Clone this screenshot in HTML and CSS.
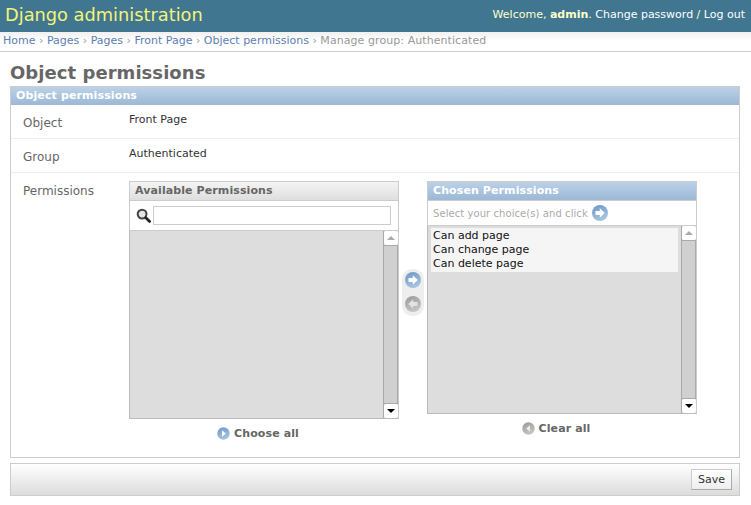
FILE: index.html
```html
<!DOCTYPE html>
<html lang="en">
<head>
    <meta charset="UTF-8">
    <title>Object permissions</title>
    <link rel="stylesheet" href="styles.css">
</head>
<body>
    <svg class="icon-defs" width="0" height="0">
        <defs>
            <linearGradient id="blueBall" x1="0" y1="0" x2="0.4" y2="1">
                <stop offset="0" stop-color="#6a97c6"/>
                <stop offset="1" stop-color="#a6c3e0"/>
            </linearGradient>
            <linearGradient id="grayBall" x1="0" y1="0" x2="0.4" y2="1">
                <stop offset="0" stop-color="#999"/>
                <stop offset="1" stop-color="#c4c4c4"/>
            </linearGradient>
        </defs>
    </svg>
    <div class="header">
        <div class="branding">Django administration</div>
        <div class="user-tools">Welcome, <strong>admin</strong>. <a href="#">Change password</a> / <a href="#">Log out</a></div>
    </div>
    <div class="breadcrumbs">
        <a href="#">Home</a> › <a href="#">Pages</a> › <a href="#">Pages</a> › <a href="#">Front Page</a> › <a href="#">Object permissions</a> › <span class="current">Manage group: Authenticated</span>
    </div>
    <div class="content">
        <h1>Object permissions</h1>
        <div class="module">
            <h2>Object permissions</h2>
            <div class="form-row">
                <div class="label">Object</div>
                <div class="value">Front Page</div>
            </div>
            <div class="form-row">
                <div class="label">Group</div>
                <div class="value">Authenticated</div>
            </div>
            <div class="form-row permissions-row">
                <div class="label">Permissions</div>
                <div class="selector">
                    <div class="selector-column">
                        <div class="selector-box">
                            <h3 class="available-title">Available Permissions</h3>
                            <div class="selector-filter">
                                <svg class="search-icon" width="15" height="15" viewBox="0 0 16 16">
                                    <circle cx="6.5" cy="6.5" r="4.7" fill="#e4e4e4" stroke="#444" stroke-width="2.2"/>
                                    <path d="M10.500 10.500l4 3.800" stroke="#222" stroke-width="3" stroke-linecap="round"/>
                                </svg>
                                <input class="filter-input" type="text">
                            </div>
                            <div class="list-box list-available">
                                <div class="list-items"></div>
                                <div class="scrollbar">
                                    <div class="scroll-btn"><span class="arrow-up"></span></div>
                                    <div class="scroll-track"></div>
                                    <div class="scroll-btn"><span class="arrow-down"></span></div>
                                </div>
                            </div>
                        </div>
                        <a class="select-link" href="#">
                            <svg width="13" height="13" viewBox="0 0 13 13">
                                <circle cx="6.5" cy="6.5" r="6.2" fill="url(#blueBall)"/>
                                <path d="M5 3.300l3.800 3.200-3.800 3.200z" fill="#fff"/>
                            </svg>
                            Choose all
                        </a>
                    </div>
                    <div class="mover">
                        <svg width="16" height="16" viewBox="0 0 16 16">
                            <circle cx="8" cy="8" r="8" fill="url(#blueBall)"/>
                            <path d="M3.500 6h4.300V3.300L12.800 8l-5 4.700V10H3.500z" fill="#fff"/>
                        </svg>
                        <svg width="16" height="16" viewBox="0 0 16 16">
                            <circle cx="8" cy="8" r="8" fill="url(#grayBall)"/>
                            <path d="M12.500 6H8.200V3.300L3.200 8l5 4.700V10h4.300z" fill="#e2e2e2"/>
                        </svg>
                    </div>
                    <div class="selector-column">
                        <div class="selector-box">
                            <h3 class="chosen-title">Chosen Permissions</h3>
                            <div class="selector-help">
                                Select your choice(s) and click
                                <svg width="16" height="16" viewBox="0 0 16 16">
                                    <circle cx="8" cy="8" r="8" fill="url(#blueBall)"/>
                                    <path d="M3.500 6h4.300V3.300L12.800 8l-5 4.700V10H3.500z" fill="#fff"/>
                                </svg>
                            </div>
                            <div class="list-box list-chosen">
                                <div class="list-items">
                                    <div class="list-selected">
                                        <div>Can add page</div>
                                        <div>Can change page</div>
                                        <div>Can delete page</div>
                                    </div>
                                </div>
                                <div class="scrollbar">
                                    <div class="scroll-btn"><span class="arrow-up"></span></div>
                                    <div class="scroll-track"></div>
                                    <div class="scroll-btn"><span class="arrow-down"></span></div>
                                </div>
                            </div>
                        </div>
                        <a class="select-link" href="#">
                            <svg width="13" height="13" viewBox="0 0 13 13">
                                <circle cx="6.5" cy="6.5" r="6.2" fill="url(#grayBall)"/>
                                <path d="M8 3.300L4.200 6.500 8 9.700z" fill="#eee"/>
                            </svg>
                            Clear all
                        </a>
                    </div>
                </div>
            </div>
        </div>
        <div class="submit-row">
            <button class="save" type="button">Save</button>
        </div>
    </div>
</body>
</html>
```

FILE: styles.css
```css
body {
    margin: 0;
    font-family: "DejaVu Sans", sans-serif;
    font-size: 12px;
    color: #333;
    background: #fff;
}

a {
    color: #5b80b2;
    text-decoration: none;
}

.icon-defs {
    display: block;
    height: 0;
}

.header {
    height: 32px;
    background: #417690;
    display: flex;
    justify-content: space-between;
    align-items: center;
    padding: 0 6px 0 5px;
}

.branding {
    font-size: 17.8px;
    color: #f4f379;
    padding-bottom: 4px;
}

.user-tools {
    font-size: 11px;
    color: #ffc;
    padding-bottom: 3px;
}

.user-tools strong {
    font-weight: bold;
}

.user-tools a {
    color: #fff;
}

/* Migas de pan */
.breadcrumbs {
    height: 19px;
    line-height: 18px;
    padding-left: 3px;
    font-size: 11px;
    color: #999;
    background: linear-gradient(to bottom, #f0f0f0, #fff 45%, #fff);
    border-bottom: 1px solid #ccc;
    white-space: nowrap;
}

.current {
    letter-spacing: 0.07px;
}

.content {
    padding: 0 11px 0 10px;
}

h1 {
    margin: 0;
    height: 34px;
    line-height: 41px;
    font-size: 18px;
    letter-spacing: 0.05px;
    font-weight: bold;
    color: #666;
}

.module {
    border: 1px solid #ccc;
    height: 370px;
}

h2 {
    margin: 0;
    height: 18px;
    line-height: 17px;
    padding-left: 5px;
    font-size: 11px;
    letter-spacing: 0.12px;
    font-weight: bold;
    color: #fff;
    background: linear-gradient(to bottom, #bcd1e7, #9bb8d6);
}

.form-row {
    display: flex;
    height: 33px;
    border-bottom: 1px solid #eee;
}

.label {
    width: 106px;
    margin-left: 12px;
    font-size: 12px;
    color: #666;
    line-height: 36px;
}

.value {
    font-size: 11px;
    line-height: 29px;
    color: #333;
}

.permissions-row {
    height: auto;
    border-bottom: none;
}

.selector {
    display: flex;
    align-items: flex-start;
    padding-top: 8px;
}

.selector-column {
    width: 270px;
}

.selector-box {
    border: 1px solid #ccc;
    border-bottom: none;
    border-top: none;
}

h3 {
    height: 18px;
    line-height: 17px;
    padding-left: 5px;
    font-size: 11px;
    letter-spacing: 0.1px;
    font-weight: bold;
    border: 1px solid #ccc;
    margin: 0 -1px;
}

.available-title {
    color: #666;
    background: linear-gradient(to bottom, #f4f4f4, #dedede);
}

.chosen-title {
    color: #fff;
    background: linear-gradient(to bottom, #bcd1e7, #9bb8d6);
}

.selector-filter {
    display: flex;
    align-items: center;
    height: 30px;
    padding-left: 6px;
    gap: 2px;
    border-bottom: 1px solid #ccc;
    box-sizing: border-box;
}

.search-icon {
    flex: none;
}

.filter-input {
    width: 238px;
    height: 19px;
    padding: 0;
    border: 1px solid #ccc;
    box-sizing: border-box;
}

.selector-help {
    display: flex;
    align-items: center;
    gap: 4px;
    height: 25px;
    padding-left: 5px;
    font-size: 10px;
    letter-spacing: 0.07px;
    color: #aaa;
    border-bottom: 1px solid #ccc;
    box-sizing: border-box;
}

.list-box {
    display: flex;
    background: #ddd;
    border-left: 1px solid #bbb;
    border-right: 1px solid #ccc;
    border-bottom: 1px solid #bbb;
    margin: 0 -1px;
    box-sizing: border-box;
}

.list-available,
.list-chosen {
    height: 188px;
}

.list-items {
    flex: 1;
    padding: 2px 3px 0 3px;
}

.list-selected {
    background: #f5f5f5;
    font-size: 11px;
    line-height: 14px;
    color: #111;
    padding: 1px 2px;
}

.scrollbar {
    width: 14px;
    display: flex;
    flex-direction: column;
    background: #d0d0d0;
    border-left: 1px solid #aaa;
}

.scroll-btn {
    height: 14px;
    background: #fff;
    border-radius: 2px;
    display: flex;
    align-items: center;
    justify-content: center;
}

.scroll-track {
    flex: 1;
    border-top: 1px solid #aaa;
    border-bottom: 1px solid #aaa;
    border-right: 1px solid #aaa;
}

.arrow-up {
    border: 4px solid transparent;
    border-top: none;
    border-bottom: 4px solid #aaa;
}

.arrow-down {
    border: 4px solid transparent;
    border-bottom: none;
    border-top: 4px solid #000;
}

.select-link {
    display: flex;
    align-items: center;
    justify-content: center;
    gap: 4px;
    margin-top: 8px;
    padding-right: 12px;
    font-size: 11px;
    letter-spacing: 0.1px;
    font-weight: bold;
    color: #666;
}

.mover {
    width: 22px;
    height: 47px;
    margin: 88px 3px 0 3px;
    display: flex;
    flex-direction: column;
    align-items: center;
    justify-content: space-between;
    padding: 3px 0 4px;
    box-sizing: border-box;
    background: #eee;
    border-radius: 10px;
    flex: none;
}

.submit-row {
    margin-top: 5px;
    height: 31px;
    display: flex;
    align-items: center;
    justify-content: flex-end;
    padding-right: 7px;
    border: 1px solid #ccc;
    background: linear-gradient(to bottom, #fff, #dcdcdc);
}

.save {
    width: 41px;
    height: 21px;
    padding: 0;
    font-family: "DejaVu Sans", sans-serif;
    font-size: 11px;
    color: #333;
    border: 1px solid #ccc;
    border-bottom-color: #aaa;
    border-right-color: #aaa;
    background: linear-gradient(to bottom, #fff, #eee);
}
```
